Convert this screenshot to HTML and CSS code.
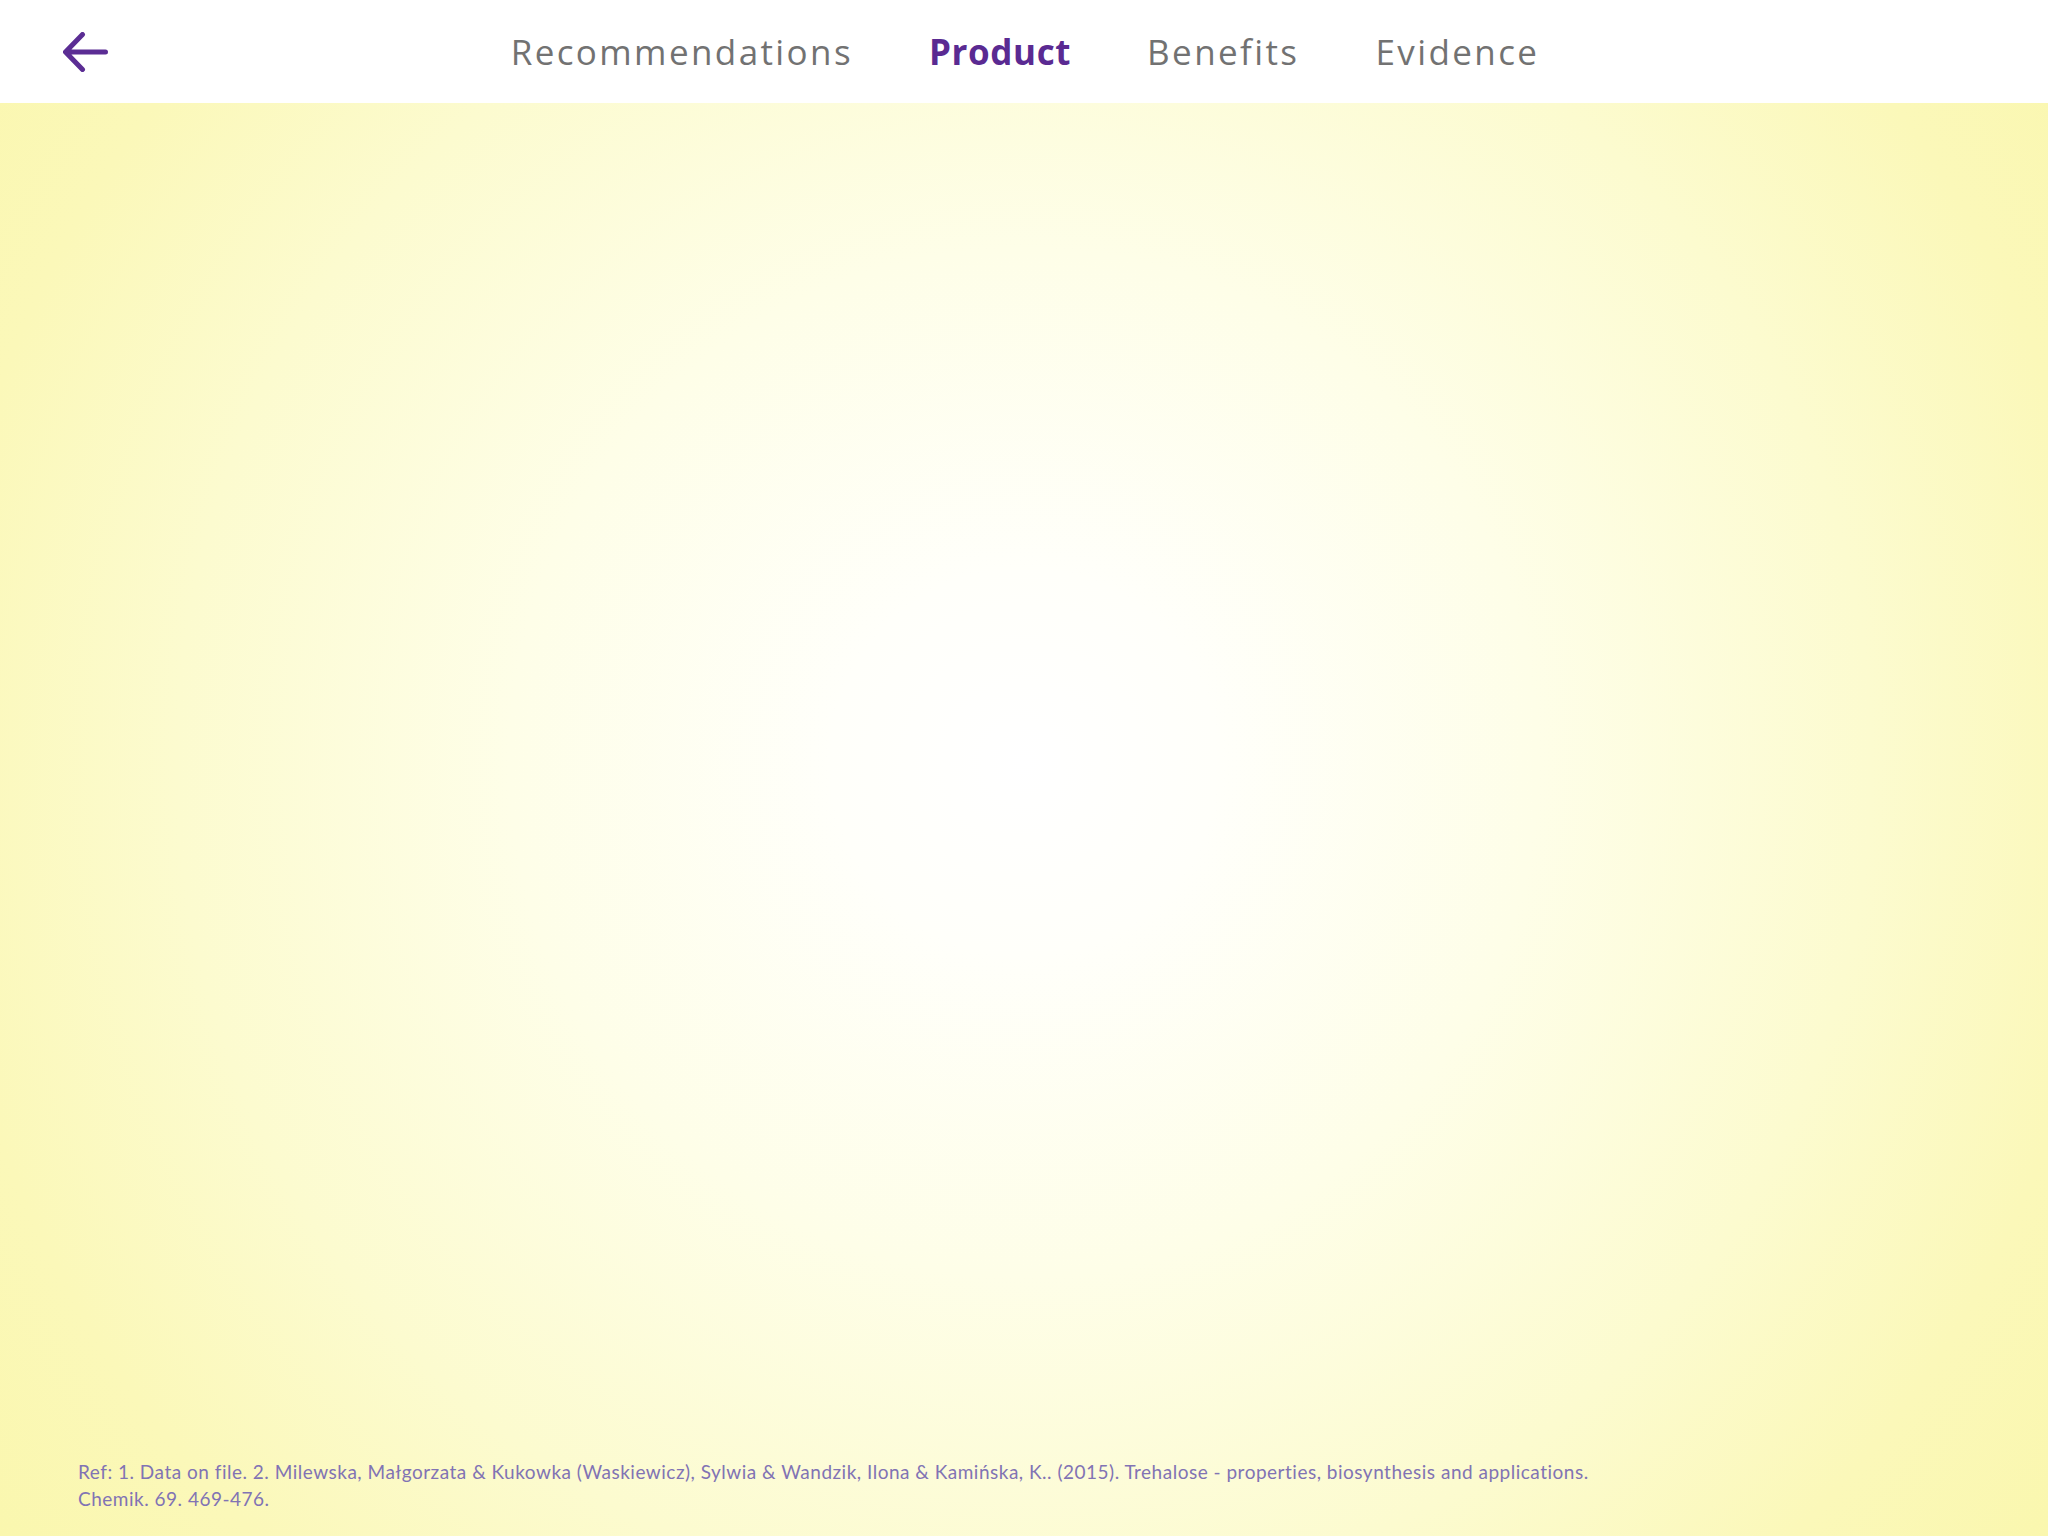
FILE: index.html
```html
<!DOCTYPE html>
<html lang="en">
<head>
<meta charset="utf-8">
<title>Product</title>
<link rel="stylesheet" href="styles.css">
</head>
<body>
<header class="topbar">
  <a class="back" href="#" aria-label="Back">
    <svg class="back-icon" width="45" height="40" viewBox="0 0 45 40" fill="none">
      <path d="M42.5 20 H3 M19.5 2.5 L2.5 20 L19.5 37.5" stroke="#5b2d94" stroke-width="5" stroke-linecap="round" stroke-linejoin="round"/>
    </svg>
  </a>
  <nav class="tabs">
    <a class="tab" href="#">Recommendations</a>
    <a class="tab active" href="#">Product</a>
    <a class="tab" href="#">Benefits</a>
    <a class="tab" href="#">Evidence</a>
  </nav>
  <div class="spacer"></div>
</header>
<main class="stage">
  <p class="refs">Ref: 1. Data on file. 2. Milewska, Małgorzata &amp; Kukowka (Waskiewicz), Sylwia &amp; Wandzik, Ilona &amp; Kamińska, K.. (2015). Trehalose - properties, biosynthesis and applications. Chemik. 69. 469-476.</p>
</main>
</body>
</html>
```
FILE: styles.css
```css
html, body {
  margin: 0;
  padding: 0;
}
body {
  width: 2048px;
  height: 1536px;
  overflow: hidden;
  background: #ffffff;
}
.topbar {
  height: 103px;
  background: #ffffff;
  display: grid;
  grid-template-columns: 1fr auto 1fr;
  align-items: center;
}
.back {
  display: flex;
  align-items: center;
  padding-left: 63px;
  padding-top: 1px;
}
.back-icon {
  display: block;
}
.tabs {
  display: flex;
  gap: 76px;
  align-items: center;
  padding-left: 2px;
}
.tab {
  font-family: "Open Sans", "DejaVu Sans", sans-serif;
  font-size: 35px;
  font-weight: 400;
  letter-spacing: 2.4px;
  color: #727272;
  text-decoration: none;
  line-height: 1;
}
.tab.active {
  color: #5a2a92;
  font-weight: 700;
  letter-spacing: 0.6px;
}
.stage {
  height: 1433px;
  background: radial-gradient(circle farthest-corner at 50% 46%, #ffffff 0%, #fffffa 15%, #fefee8 40%, #fcfbcf 66%, #fbf8b9 85%, #faf7ae 100%);
  display: flex;
  flex-direction: column;
  justify-content: flex-end;
  box-sizing: border-box;
  padding: 0 0 24px 78px;
}
.refs {
  margin: 0;
  max-width: 1560px;
  font-family: "Lato", "Liberation Sans", sans-serif;
  font-size: 19px;
  letter-spacing: 0.5px;
  line-height: 27px;
  color: #8173b4;
}
```
